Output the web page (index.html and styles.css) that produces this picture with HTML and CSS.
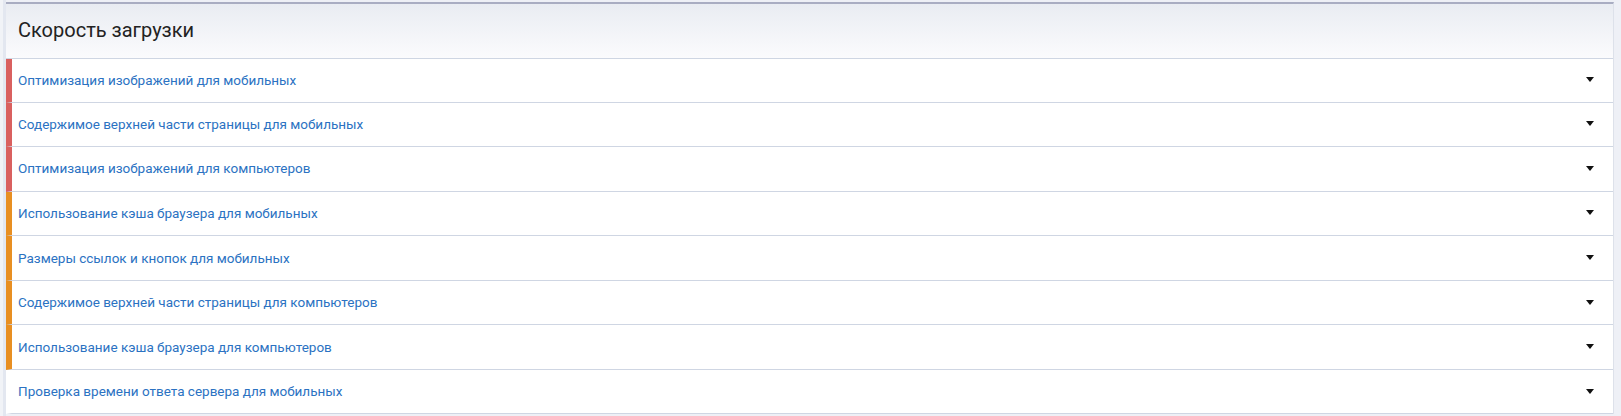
FILE: index.html
```html
<!DOCTYPE html>
<html lang="ru">
<head>
  <meta charset="UTF-8">
  <title>Скорость загрузки</title>
  <link rel="stylesheet" href="styles.css">
</head>
<body>

  <div class="page">
    <div class="panel">
      <div class="panel-head">
        <h3>Скорость загрузки</h3>
      </div>

      <ul class="checks">
        <li class="check bad"><a href="#">Оптимизация изображений для мобильных</a><span class="caret"></span></li>
        <li class="check bad"><a href="#">Содержимое верхней части страницы для мобильных</a><span class="caret"></span></li>
        <li class="check bad"><a href="#">Оптимизация изображений для компьютеров</a><span class="caret"></span></li>
        <li class="check warn"><a href="#">Использование кэша браузера для мобильных</a><span class="caret"></span></li>
        <li class="check warn"><a href="#">Размеры ссылок и кнопок для мобильных</a><span class="caret"></span></li>
        <li class="check warn"><a href="#">Содержимое верхней части страницы для компьютеров</a><span class="caret"></span></li>
        <li class="check warn"><a href="#">Использование кэша браузера для компьютеров</a><span class="caret"></span></li>
        <li class="check"><a href="#">Проверка времени ответа сервера для мобильных</a><span class="caret"></span></li>
      </ul>
    </div>
  </div>

</body>
</html>
```

FILE: styles.css
```css
body {
  margin: 0;
  font-family: Roboto, "Liberation Sans", sans-serif;
  background: linear-gradient(to right, #f1f3f7 0, #f1f3f7 3px, #e3e7f0 3px, #e3e7f0 6px, #eef0f6 6px);
}
.page {
  padding: 2px 7px 0 6px;
}
.panel {
  background: white;
  border-top: 2px solid #a9adc2;
  border-right: 1px solid #dde1ea;
}
.panel-head {
  display: flex;
  align-items: center;
  height: 55px;
  padding: 0 12px 2px;
  box-sizing: border-box;
  background: linear-gradient(to bottom, #e9ecf2, #fbfbfd);
  border-bottom: 1px solid #cfd6e3;
}
.panel-head h3 {
  margin: 0;
  font-size: 20px;
  font-weight: 400;
  color: #222;
}
.checks {
  list-style: none;
  margin: 0;
  padding: 0;
}
.check {
  display: flex;
  align-items: center;
  justify-content: space-between;
  height: 42.55px;
  padding: 0 19px 1px 6px;
  border-left: 6px solid white;
  border-bottom: 1px solid #cfd6e3;
  font-size: 13.5px;
}
.check:first-child {
  height: 41.6px;
}
.check.bad {
  border-left-color: #d9605f;
}
.check.warn {
  border-left-color: #e88f22;
}
.check a {
  color: #2b72c2;
  text-decoration: none;
}
.caret {
  width: 0;
  height: 0;
  border-left: 4px solid transparent;
  border-right: 4px solid transparent;
  border-top: 5px solid #111;
}
```
